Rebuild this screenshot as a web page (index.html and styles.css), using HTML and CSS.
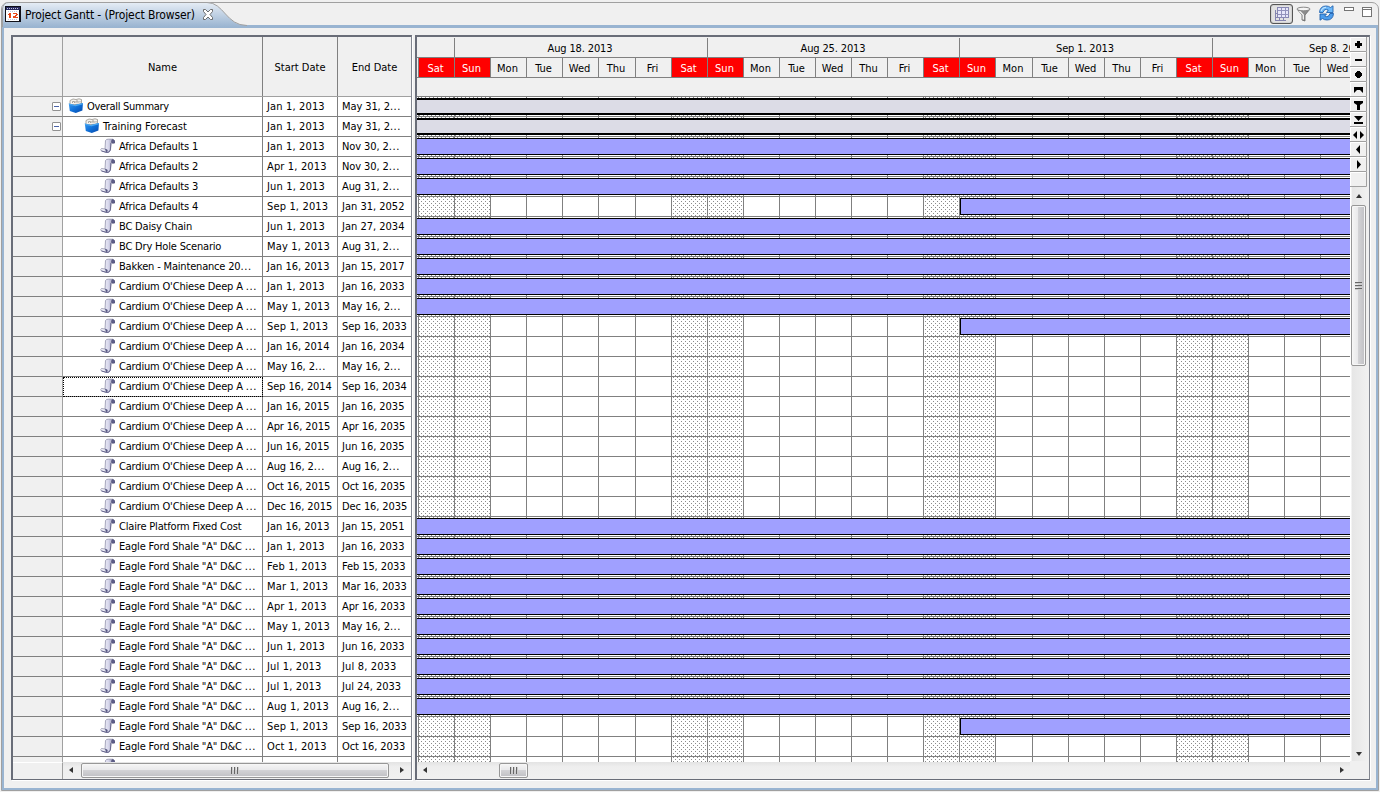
FILE: index.html
```html
<!DOCTYPE html>
<html lang="en">
<head>
<meta charset="utf-8">
<title>Project Gantt</title>
<link rel="stylesheet" href="styles.css">
</head>
<body>
<svg width="0" height="0" class="defs">
  <defs>
    <linearGradient id="tabfill" x1="0" y1="0" x2="0" y2="1"><stop offset="0" stop-color="#e6edf5"/><stop offset="1" stop-color="#99b4d1"/></linearGradient>
    <linearGradient id="bluebox" x1="0" y1="0" x2="1" y2="1"><stop offset="0" stop-color="#3c9cf0"/><stop offset=".5" stop-color="#1070d8"/><stop offset="1" stop-color="#0848a8"/></linearGradient>
    <linearGradient id="paper" x1="0" y1="0" x2="1" y2="0"><stop offset="0" stop-color="#fff"/><stop offset=".55" stop-color="#d8d8ec"/><stop offset="1" stop-color="#8484a8"/></linearGradient>
    <symbol id="box" viewBox="0 0 16 16"><path d="M2 7V2.500l3-1.500 3 .5 3-.7 2.500.7V6z" fill="#f4f2ee" stroke="#96928c" stroke-width=".8"/><path d="M4.500 5V3.500h2V5M8 5V3h2v2M12 4.500V3" fill="none" stroke="#aaa59e"/><path d="M.8 5.500l6 1.500 8.200-2-.6 7.500-6.600 2.500-6-2z" fill="url(#bluebox)"/><path d="M.8 5.500l6 1.500 8.200-2v1.200L7.500 8.200 1 6.800z" fill="#4ca8f0"/></symbol>
    <symbol id="scroll" viewBox="0 0 16 16"><path d="M5.500 2.500Q6.500 1 8.500 1.200H13Q15 2 14.500 5H12V3.500L11 5 10.500 12Q9.500 15 7 14.500L1.500 13Q0 11.500 1.500 10.500L5 11z" fill="url(#paper)" stroke="#8484a0" stroke-width=".7"/><path d="M12 5q-.8-2 .2-3.300Q15.100 1.500 14.500 5zM5 11.200l2.200.7q0 2-1 2.400" fill="#61618c" stroke="#50507a" stroke-width=".8"/><path d="M1.500 13l5.500 1.500q2.500 0 3.300-2.500l.7-7" stroke="#62628a" fill="none" stroke-width=".9"/></symbol>
  </defs>
</svg>
<div class="view">
  <div class="tabbar">
    <svg class="tabshape" width="246" height="25"><path d="M0 25V6Q1 0 7 .5H205C222 .5 224 23.5 245 23.5V25z" fill="url(#tabfill)"/><path d="M.5 25V7Q1 .5 7 .5H205C222 .5 224 23.5 245 23.5" fill="none" stroke="#a0a0a0"/></svg>
    <div class="tab">
      <svg width="16" height="16" viewBox="0 0 16 16" shape-rendering="crispEdges"><path fill="#101018" d="M0 0h16v16H0z"/><path fill="#282a60" d="M1 1h14v3H1z"/><path fill="#fff" d="M1 4h13v11H1z"/><path stroke="#c4c8dc" d="M2 2.500h12M3 5.500h10M3 13.500h10" stroke-dasharray="1 1"/><path fill="#e84818" d="M4 7h2v5H4zM3 8h1v1H3zM8 7h4v1H8zM11 8h2v1h-2zM10 9h2v1h-2zM8 10h3v1H8zM8 11h5v1H8z"/></svg>
      <span class="title">Project Gantt - (Project Browser)</span>
      <svg class="close" width="12" height="11" viewBox="0 0 12 11"><path d="M1.500 .5h2L6 3 8.500 .5h2v2L8 5.500l2.500 3v2h-2L6 8l-2.500 2.500h-2v-2l2.500-3-2.500-3z" fill="#fff" stroke="#606060" stroke-width=".9"/></svg>
    </div>
    <div class="tools">
      <span class="toggle"><svg width="16" height="16" viewBox="0 0 16 16" shape-rendering="crispEdges"><path d="M4.500 1.500h11v10h-11z" fill="#e6e6fa" stroke="#8888b4"/><path d="M4.500 4.500h11M4.500 8.500h11M8.500 1.500v10M12.500 1.500v10" stroke="#9292bc"/><path d="M2.500 4v10.500H13M6.500 12v3M10.500 12v3M2 7.500h3M2 11.500h3" fill="none" stroke="#8484b0"/></svg></span>
      <svg class="funnel" width="16" height="16" viewBox="0 0 16 16"><path d="M1 3l5 6v5l3 1V9L14 3z" fill="#8c8c8c" stroke="#666" stroke-width=".8"/><path d="M3.500 5l3.800 4v4.500" stroke="#eee" stroke-width="1.500" fill="none"/><ellipse cx="7.500" cy="3" rx="6.500" ry="1.800" fill="#f4f4f4" stroke="#888"/></svg>
      <svg class="refresh" width="17" height="16" viewBox="0 0 17 16"><path d="M1.500 7.500Q2 1 8 1q2.800 0 4.500 1.500L15 .8v6.700H8.500L10.300 5Q6.500 3 5 7.500z" fill="#6cb8fa" stroke="#2464b0" stroke-width=".9"/><path d="M15.500 8.500Q15 15 9 15q-2.800 0-4.500-1.500L2 15.200V9h6.500L6.700 11q3.800 2 5.300-2.500z" fill="#4c9cec" stroke="#2060ac" stroke-width=".9"/><path d="M3 6Q4 2.500 8 2.200" stroke="#d4eeff" fill="none"/></svg>
      <svg class="winbtns" width="30" height="12" viewBox="0 0 30 12" shape-rendering="crispEdges"><path d="M.5 1.500h9v3h-9zM18.500 1.500h9v9h-9zM18.500 3.500h9" fill="#fff" stroke="#747474"/></svg>
    </div>
  </div>
  <div class="body">
    <section class="tree">
      <div class="thead"><div></div><div>Name</div><div>Start Date</div><div>End Date</div></div>
      <div class="rows" id="rows"></div>
      <div class="foot"><div class="corner"></div>
        <div class="hbar"><i class="arr left"></i><div class="thumb h wide"><b></b></div><i class="arr right"></i></div></div>
    </section>
    <section class="chart">
      <div class="plot">
        <svg id="gantt" width="933" height="725" shape-rendering="crispEdges"></svg>
        <div class="hbar"><i class="arr left"></i><div class="thumb h small"><b></b></div><i class="arr right"></i></div>
      </div>
      <div class="side">
        <div class="sidebtns" id="side"></div>
        <div class="vbar"><i class="arr up"></i><div class="thumb v"><b></b></div><i class="arr down"></i></div>
        <div class="sq"></div>
      </div>
    </section>
  </div>
</div>
<script src="app.js"></script>
</body>
</html>
```

FILE: styles.css
```css
* { box-sizing: border-box; }
body { margin: 0; width: 1380px; height: 792px; overflow: hidden; background: #f0f0f0; font: 11px/20px "DejaVu Sans Condensed", "Noto Sans", sans-serif; font-stretch: condensed; color: #000; }
.defs { position: absolute; }
svg { display: block; flex: none; }
.view { margin: 2px 1px 0; width: 1378px; height: 789px; border: 1px solid #a0a0a0; border-radius: 7px 7px 0 0; display: flex; flex-direction: column; }
.tabbar { height: 22px; flex: none; display: flex; justify-content: space-between; position: relative; }
.tabshape { position: absolute; left: 0; top: -1px; }
.tab { position: relative; display: flex; padding: 3px 0 0 3px; }
.title { font-size: 12px; line-height: 17px; margin: 1px 7px 0 4px; width: 170px; white-space: nowrap; letter-spacing: -0.12px; }
.close { margin-top: 3px; }
.tools { display: flex; padding: 0 4px 0 0; align-items: flex-start; }
.toggle { width: 23px; height: 20px; margin-top: 1px; padding: 1px 2px; border: 1px solid #555; border-radius: 3px; background: #e2e2e2; box-shadow: inset 0 0 1px #555; }
.funnel { margin: 3px 0 0 3px; }
.refresh { margin: 2px 0 0 6px; }
.winbtns { margin: 3px 0 0 9px; }
.body { flex: 1; border: solid #99b4d1; border-width: 3px 2px 2px; display: flex; padding: 7px 0 0 7px; gap: 3px; }
.tree { width: 401px; height: 745px; border: solid #696d78; border-width: 2px 1px 1px 2px; border-right-color: #82868f; box-shadow: 1px 1px #fff; overflow: hidden; }
.thead { height: 60px; display: grid; grid-template-columns: 50px 200px 75px 73px; line-height: 61px; text-align: center; border-bottom: 1px solid #a0a0a0; }
.thead div { border-right: 1px solid #808080; height: 59px; }
.thead div:first-child { border-color: #a0a0a0; }
.thead div:last-child { border: 0; }
.rows { height: 665px; overflow: hidden; }
.row { display: grid; grid-template-columns: 50px 200px 75px 73px; height: 20px; background: #fff; }
.row > div { border-right: 1px solid #808080; border-bottom: 1px solid #808080; white-space: nowrap; padding-left: 4px; line-height: 19px; overflow: hidden; }
.row > div:last-child { border-right: 0; }
.row .gut { background: #f0f0f0; border-right-color: #a0a0a0; display: flex; justify-content: flex-end; padding: 5px 1px 0 0; }
.exp { width: 9px; height: 9px; border: 1px solid #919191; border-radius: 1px; background: linear-gradient(#4b63a7, #4b63a7) center/5px 1px no-repeat #fff; }
.row .name { display: flex; padding-left: 5px; letter-spacing: -0.18px; }
.row .name svg { margin: 1px 3px 0 0; }
.row .name.l0 { letter-spacing: -0.3px; }
.row .name.l1 { letter-spacing: 0; padding-left: 21px; }
.row .name.l2 { padding-left: 37px; }
.wide-caps { letter-spacing: 0.15px; }
.tight { letter-spacing: -0.1px; }
.dots { letter-spacing: 0.6px; }
.row .focus { outline: 1px dotted #000; outline-offset: -1px; }
.foot { display: flex; height: 17px; }
.corner { width: 50px; border-right: 1px solid #a0a0a0; border-top: 1px solid #fff; }
.hbar { display: flex; align-items: center; flex: 1; height: 16px; background: linear-gradient(#e3e3e3, #eee 30%, #f0f0f0); padding: 0 7px; justify-content: space-between; }
.tree .hbar { padding: 0 7px 0 6px; }
.plot .hbar { padding: 0 6px; }
.arr { width: 0; height: 0; border: 3px solid transparent; flex: none; }
.left { border-right: 4px solid #333; border-left: 0; }
.right { border-left: 4px solid #333; border-right: 0; }
.up { border-bottom: 4px solid #333; border-top: 0; }
.down { border-top: 4px solid #333; border-bottom: 0; }
.thumb { border: 1px solid #979797; border-radius: 2px; background: linear-gradient(#f5f5f5, #e9e9eb 45%, #d2d2d5 50%, #c0c0c4); display: flex; align-items: center; justify-content: center; box-shadow: inset 0 0 0 1px #f6f6f6; }
.thumb.h { height: 15px; }
.wide { width: 308px; margin-left: 8px; margin-right: auto; }
.small { width: 29px; margin-right: auto; margin-left: 72px; }
.thumb b { width: 8px; height: 7px; background: repeating-linear-gradient(90deg, #666 0 1px, #ccc 1px 2px, transparent 2px 3px); }
.thumb.v { width: 15px; height: 161px; margin-top: 7px; background: linear-gradient(90deg, #f5f5f5, #e9e9eb 45%, #d2d2d5 50%, #c0c0c4); }
.thumb.v b { width: 7px; height: 8px; background: repeating-linear-gradient(#666 0 1px, #ccc 1px 2px, transparent 2px 3px); }
.chart { width: 955px; height: 745px; border: solid #696d78; border-width: 2px 1px 1px 2px; border-right-color: #82868f; box-shadow: 1px 1px #fff; display: flex; }
.plot { width: 933px; flex: none; }
.side { flex: 1; display: flex; flex-direction: column; background: #f0f0f0; }
.vbar { flex: 1; width: 17px; display: flex; flex-direction: column; align-items: center; padding: 7px 0 5px; background: linear-gradient(90deg, #fff 1px, #e6e6e6 2px, #f0f0f0); }
.down { margin-top: auto; }
.sq { height: 18px; }
#gantt text { font: 11px "DejaVu Sans Condensed", "Noto Sans", sans-serif; text-anchor: middle; }
```

FILE: app.js
```js
const O = "Cardium O'Chiese Deep A ...", E = 'Eagle Ford Shale "A" D&C ...';
// [name, start, end, bar]: 2 = summary, 1 = full width, 9 = begins Sep 1, 0 = out of range
const data = [
["Overall Summary","Jan 1, 2013","May 31, 2...",2],["Training Forecast","Jan 1, 2013","May 31, 2...",2],
["Africa Defaults 1","Jan 1, 2013","Nov 30, 2...",1],["Africa Defaults 2","Apr 1, 2013","Nov 30, 2...",1],
["Africa Defaults 3","Jun 1, 2013","Aug 31, 2...",1],["Africa Defaults 4","Sep 1, 2013","Jan 31, 2052",9],
["BC Daisy Chain","Jun 1, 2013","Jan 27, 2034",1],["BC Dry Hole Scenario","May 1, 2013","Aug 31, 2...",1],
["Bakken - Maintenance 20...","Jan 16, 2013","Jan 15, 2017",1],
[O,"Jan 1, 2013","Jan 16, 2033",1],[O,"May 1, 2013","May 16, 2...",1],[O,"Sep 1, 2013","Sep 16, 2033",9],
[O,"Jan 16, 2014","Jan 16, 2034",0],[O,"May 16, 2...","May 16, 2...",0],[O,"Sep 16, 2014","Sep 16, 2034",0],
[O,"Jan 16, 2015","Jan 16, 2035",0],[O,"Apr 16, 2015","Apr 16, 2035",0],[O,"Jun 16, 2015","Jun 16, 2035",0],
[O,"Aug 16, 2...","Aug 16, 2...",0],[O,"Oct 16, 2015","Oct 16, 2035",0],[O,"Dec 16, 2015","Dec 16, 2035",0],
["Claire Platform Fixed Cost","Jan 16, 2013","Jan 15, 2051",1],
[E,"Jan 1, 2013","Jan 16, 2033",1],[E,"Feb 1, 2013","Feb 15, 2033",1],[E,"Mar 1, 2013","Mar 16, 2033",1],
[E,"Apr 1, 2013","Apr 16, 2033",1],[E,"May 1, 2013","May 16, 2...",1],[E,"Jun 1, 2013","Jun 16, 2033",1],
[E,"Jul 1, 2013","Jul 8, 2033",1],[E,"Jul 1, 2013","Jul 24, 2033",1],[E,"Aug 1, 2013","Aug 16, 2...",1],
[E,"Sep 1, 2013","Sep 16, 2033",9],[E,"Oct 1, 2013","Oct 16, 2033",0],[E,"","",0]];
const label = t => t.replace('&', '&amp;').replace('...', '<span class="dots">...</span>');
const date = t => `<div class="${/^\w+ \d,/.test(t) ? 'wide-caps' : t[0] === 'J' ? '' : 'tight'}">${label(t)}</div>`;
document.getElementById('rows').innerHTML = data.map((r, i) =>
  `<div class="row"><div class="gut">${i < 2 ? '<span class="exp"></span>' : ''}</div>` +
  `<div class="name l${Math.min(i, 2)}${i === 14 ? ' focus' : ''}"><svg width="16" height="16"><use href="#${i < 2 ? 'box' : 'scroll'}"/></svg><span>${label(r[0])}</span></div>` +
  date(r[1]) + date(r[2]) + '</div>').join('');

// Chart coordinates: origin is the top left of the plot area
const day = i => Math.round(1 + 36.09 * i);
const rect = (x, y, w, h, f) => `<rect x="${x}" y="${y}" width="${w}" height="${h}" fill="${f}"/>`;
let s = '<defs><pattern id="dots" width="4" height="4" patternUnits="userSpaceOnUse"><path d="M0 0h1v1H0zM2 2h1v1H2z" fill="#8c8c8c"/></pattern></defs>';
s += rect(0, 0, 933, 59, '#f0f0f0') + rect(0, 59, 933, 666, '#fff');
const names = ['Sat', 'Sun', 'Mon', 'Tue', 'Wed', 'Thu', 'Fri'];
for (let i = 0; i < 26; i++) {
  const x = day(i), w = day(i + 1) - x, we = i % 7 < 2;
  if (we) s += rect(x, 21, w, 20, '#f00') + rect(x, 59, w, 666, 'url(#dots)');
  s += rect(x, 21, 1, 20, '#808080') + rect(x, 60, 1, 665, '#808080');
  s += `<text x="${x + w / 2 - .5}" y="35" fill="${we ? '#fff' : '#000'}">${names[i % 7]}</text>`;
  if (i % 7 === 1) s += rect(x, 1, 1, 20, '#808080');
}
s += rect(0, 20, 933, 1, '#808080') + rect(0, 40, 933, 1, '#808080');
['Aug 18. 2013', 'Aug 25. 2013', 'Sep 1. 2013', 'Sep 8. 2013'].forEach((t, k) => s += `<text x="${day(1 + 7 * k) + 126}" y="15" textLength="${k < 2 ? 65 : 58}">${t}</text>`);
data.forEach((r, i) => {
  const y = 59 + 20 * i, x = r[3] === 9 ? day(15) + 1 : 0;
  s += rect(0, y, 933, 1, '#808080');
  if (!r[3]) return;
  const b = r[3] === 2 ? 2 : 1;
  s += rect(x, y + 2, 933 - x, 17, '#000') + rect(x + (x ? 1 : 0), y + 2 + b, 933, 17 - 2 * b, b === 2 ? '#dcdce6' : '#a0a0ff');
});
document.getElementById('gantt').innerHTML = s;

const glyphs = ['M7 4h3v2h2v3h-2v2H7V9H5V6h2z', 'M5 7h7v2H5z', 'M7 4h3v1h1v1h1v3h-1v1h-1v1H7v-1H6V9H5V6h1V5h1z',
 'M4 5h9v6L10 8H7l-3 3z', 'M4 4h9v2l-3 2v5H7V8L4 6z', 'M4 4h9L8.500 9zM4 10h9v2H4z', 'M7 4v8L3 8zM10 4v8l4-4z', 'M10 3v9L6 7.500z', 'M7 3v9l4-4.500z', ''];
document.getElementById('side').innerHTML = glyphs.map(d =>
 `<svg width="17" height="15"><path d="M16.500 0v14.500H0" fill="none" stroke="#a0a0a0"/><path d="M.5 14V.5H16" fill="none" stroke="#fff"/><path d="${d}"/></svg>`).join('');
```
